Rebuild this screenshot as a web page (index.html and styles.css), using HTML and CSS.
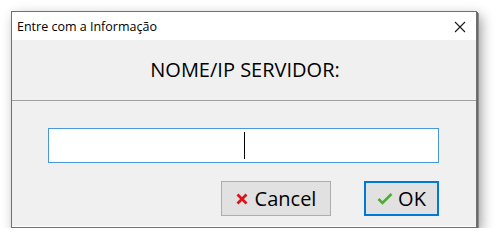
FILE: index.html
```html
<!DOCTYPE html>
<html lang="pt">
<head>
<meta charset="utf-8">
<link rel="stylesheet" href="styles.css">
</head>
<body>
<div class="window">
  <div class="titlebar">
    <span class="title">Entre com a Informação</span>
    <svg class="close" width="12" height="12" viewBox="0 0 12 12"><path d="M1 1L11 11M11 1L1 11" stroke="#1a1a1a" stroke-width="1.1" fill="none"/></svg>
  </div>
  <div class="content">
    <div class="header">
      <span class="label">NOME/IP SERVIDOR:</span>
    </div>
    <div class="main">
      <div class="input"><span class="caret"></span></div>
      <div class="buttons">
        <div class="btn cancel">
          <svg class="icon" width="12" height="12" viewBox="0 0 12 12"><path d="M1.5 1.5L10.5 10.5M10.5 1.5L1.5 10.5" stroke="#d9151b" stroke-width="2.8" fill="none"/></svg>
          <span>Cancel</span>
        </div>
        <div class="btn ok">
          <svg class="icon" width="16" height="13" viewBox="0 0 16 13"><path d="M1.5 7L5.5 11L14.5 2" stroke="#4caf2f" stroke-width="2.6" fill="none"/></svg>
          <span>OK</span>
        </div>
      </div>
    </div>
  </div>
</div>
</body>
</html>
```

FILE: styles.css
```css
html, body {
  margin: 0;
  padding: 0;
  background: #ffffff;
}
body {
  padding: 11px 0 0 11px;
  font-family: "Open Sans", "Noto Sans", "Liberation Sans", sans-serif;
}
.window {
  width: 464px;
  height: 215px;
  border: 1px solid #707070;
  display: flex;
  flex-direction: column;
  background: #f0f0f0;
  box-shadow: 1px 1px 0 #6a6a6a, 2px 2px 0 #8a8a8a, 4px 5px 12px rgba(0, 0, 0, 0.4);
}
.titlebar {
  height: 28px;
  background: #ffffff;
  display: flex;
  align-items: center;
  justify-content: space-between;
  padding: 0 10px 0 5px;
}
.title {
  font-size: 12.5px;
  color: #000;
}
.close {
  display: block;
  margin-top: 1px;
}
.content {
  flex: 1;
  display: flex;
  flex-direction: column;
  border-bottom: 1px solid #ffffff;
}
.header {
  height: 60px;
  border-bottom: 1px solid #a0a0a0;
  display: flex;
  align-items: center;
  justify-content: center;
}
.label {
  font-size: 20px;
  color: #000;
  margin-top: -2px;
  margin-left: 2px;
}
.main {
  padding: 27px 37px 0 36px;
  display: flex;
  flex-direction: column;
}
.input {
  height: 33px;
  border: 1px solid #4a98dc;
  background: #ffffff;
  display: flex;
  align-items: center;
  justify-content: center;
}
.caret {
  width: 1px;
  height: 27px;
  background: #000;
  margin-left: 1px;
}
.buttons {
  display: flex;
  justify-content: flex-end;
  gap: 33px;
  margin-top: 18px;
}
.btn {
  height: 33px;
  background: #e1e1e1;
  border: 1px solid #adadad;
  display: flex;
  align-items: center;
  justify-content: center;
  gap: 7px;
  font-size: 20px;
  color: #000;
  box-sizing: content-box;
}
.btn span {
  margin-top: -1px;
}
.cancel {
  width: 108px;
}
.ok {
  width: 71px;
  height: 31px;
  border: 2px solid #0078d7;
  gap: 5px;
}
.icon {
  display: block;
}
```
